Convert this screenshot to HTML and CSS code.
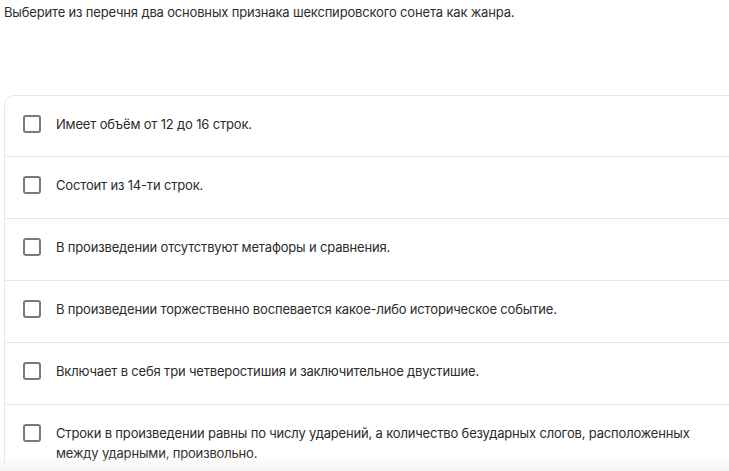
FILE: index.html
```html
<!DOCTYPE html>
<html lang="ru">
<head>
  <meta charset="UTF-8" />
  <meta name="viewport" content="width=device-width, initial-scale=1.0"/>
  <title>Сонет — вопрос</title>
  <link rel="stylesheet" href="styles.css">
</head>
<body>

  <main>
    <p class="question">Выберите из перечня два основных признака шекспировского сонета как жанра.</p>

    <div class="options">
      <label class="option"><span class="box"></span><span>Имеет объём от 12 до 16 строк.</span></label>
      <label class="option"><span class="box"></span><span>Состоит из 14-ти строк.</span></label>
      <label class="option"><span class="box"></span><span>В произведении отсутствуют метафоры и сравнения.</span></label>
      <label class="option"><span class="box"></span><span>В произведении торжественно воспевается какое-либо историческое событие.</span></label>
      <label class="option"><span class="box"></span><span>Включает в себя три четверостишия и заключительное двустишие.</span></label>
      <label class="option"><span class="box"></span><span>Строки в произведении равны по числу ударений, а количество безударных слогов, расположенных между ударными, произвольно.</span></label>
    </div>
  </main>

  <div class="fade"></div>

</body>
</html>
```

FILE: styles.css
```css
* {
  box-sizing: border-box;
}

body {
  font-family: Inter, "Noto Sans", sans-serif;
  background: #fff;
  color: #333;
  margin: 0;
  padding: 0;
  overflow: hidden;
}

main {
  padding: 0 0 0 4px;
}

.question {
  margin: 0;
  padding-top: 4px;
  font-size: 13px;
  line-height: 16px;
  letter-spacing: -0.17px;
  color: #2d2d2d;
}

.options {
  margin-top: 75px;
  width: 760px;
  border: 1px solid #e8e8e8;
  border-radius: 10px;
}

.option {
  display: flex;
  align-items: flex-start;
  gap: 15px;
  padding: 18px 56px 23px 18px;
  border-top: 1px solid #e8e8e8;
  font-size: 13px;
  line-height: 20px;
  letter-spacing: -0.17px;
  color: #2b2b2b;
  cursor: pointer;
}

.option:first-child {
  border-top: none;
  padding-bottom: 22px;
}

.box {
  flex: none;
  width: 18px;
  height: 18px;
  margin-top: 1px;
  border: 2px solid #7a7a7a;
  border-radius: 3px;
  background: #fff;
}

.fade {
  position: fixed;
  left: 0;
  right: 0;
  bottom: 0;
  height: 16px;
  background: linear-gradient(to bottom, rgba(245,245,245,0), #f4f4f4);
  pointer-events: none;
}
```
